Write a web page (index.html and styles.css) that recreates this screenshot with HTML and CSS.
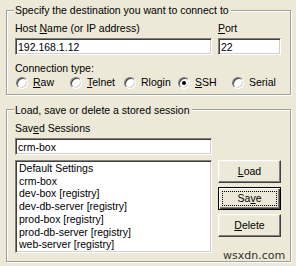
FILE: index.html
```html
<!DOCTYPE html>
<html>
<head>
<meta charset="utf-8">
<link rel="stylesheet" href="styles.css">
</head>
<body>
<div class="dlg">
  <div class="group g1">
    <div class="legend">Specify the destination you want to connect to</div>
    <div class="grid hostgrid">
      <div class="lbl">Host <u>N</u>ame (or IP address)</div>
      <div class="lbl"><u>P</u>ort</div>
      <div class="edit">192.168.1.12</div>
      <div class="edit">22</div>
    </div>
    <div class="lbl ctlabel">Connection type:</div>
    <div class="radios">
      <div class="radio"><span class="rb"></span><span><u>R</u>aw</span></div>
      <div class="radio"><span class="rb"></span><span><u>T</u>elnet</span></div>
      <div class="radio"><span class="rb"></span><span>Rlogin</span></div>
      <div class="radio"><span class="rb on"></span><span><u>S</u>SH</span></div>
      <div class="radio"><span class="rb"></span><span>Serial</span></div>
    </div>
  </div>
  <div class="group g2">
    <div class="legend">Load, save or delete a stored session</div>
    <div class="grid sessgrid">
      <div class="lbl">Sav<u>e</u>d Sessions</div>
      <div></div>
      <div class="edit">crm-box</div>
      <div></div>
      <div class="list">
        <div>Default Settings</div>
        <div>crm-box</div>
        <div>dev-box [registry]</div>
        <div>dev-db-server [registry]</div>
        <div>prod-box [registry]</div>
        <div>prod-db-server [registry]</div>
        <div>web-server [registry]</div>
      </div>
      <div class="buttons">
        <div class="btn"><span class="cap"><u>L</u>oad</span></div>
        <div class="btn def"><span class="cap focus">Sa<u>v</u>e</span></div>
        <div class="btn"><span class="cap"><u>D</u>elete</span></div>
      </div>
    </div>
  </div>
  <div class="wm">wsxdn.com</div>
</div>
</body>
</html>
```
FILE: styles.css
```css
* { box-sizing: border-box; }
html, body { margin: 0; padding: 0; }
body {
  width: 296px;
  height: 266px;
  overflow: hidden;
  background: #ece9d8;
  font-family: "Liberation Sans", Arial, sans-serif;
  font-size: 10.5px;
  line-height: 13px;
  color: #000;
}
.dlg {
  position: relative;
  height: 266px;
  padding: 10px 5px 0 6px;
}
.group {
  border: 1px solid #a0a0a0;
  box-shadow: inset 1px 1px 0 #fff, 1px 1px 0 #fff;
  padding: 0 9px 0 8px;
}
.g1 { height: 85px; }
.g2 { height: 153px; margin-top: 14px; }
.legend {
  width: max-content;
  margin: -7px 0 0 -1px;
  padding: 0 2px 0 1px;
  background: #ece9d8;
  height: 13px;
}
.g2 .legend { margin-top: -6px; }
.grid {
  display: grid;
  grid-template-columns: 197px 63px;
  column-gap: 6px;
  margin-top: 5px;
}
.lbl { height: 13px; white-space: nowrap; }
.edit {
  margin-top: 3px;
  height: 17px;
  background: #fff;
  border: 1px solid;
  border-color: #808080 #fff #fff #808080;
  box-shadow: inset 1px 1px 0 #404040, inset -1px -1px 0 #d4d0c8;
  padding: 2px 0 0 2px;
  white-space: nowrap;
  overflow: hidden;
}
.ctlabel { margin-top: 7px; }
.radios {
  display: grid;
  grid-template-columns: repeat(5, 54px);
  margin: 1px 0 0 1px;
}
.radio {
  display: flex;
  align-items: center;
  height: 13px;
  white-space: nowrap;
}
.rb {
  width: 12px;
  height: 12px;
  margin-right: 5px;
  flex: none;
  border-radius: 50%;
  border: 1px solid;
  border-color: #808080 #fff #fff #808080;
  background: #fff;
  box-shadow: inset 1px 1px 0 #404040, inset -1px -1px 0 #d4d0c8;
  display: flex;
  align-items: center;
  justify-content: center;
}
.rb.on::before {
  content: "";
  width: 4px;
  height: 4px;
  border-radius: 50%;
  background: #000;
}
.list {
  margin-top: 5px;
  height: 93px;
  background: #fff;
  border: 1px solid;
  border-color: #808080 #fff #fff #808080;
  box-shadow: inset 1px 1px 0 #404040, inset -1px -1px 0 #d4d0c8;
  padding: 1px 0 0 3px;
  line-height: 12.7px;
  overflow: hidden;
  white-space: nowrap;
}
.buttons {
  margin-top: 5px;
  display: flex;
  flex-direction: column;
  gap: 4px;
}
.btn {
  height: 23px;
  display: flex;
  padding: 3px;
  border: 1px solid;
  border-color: #fff #404040 #404040 #fff;
  box-shadow: inset -1px -1px 0 #808080, inset 1px 1px 0 #f1efe2;
  background: #ece9d8;
}
.btn.def {
  border-color: #000;
  box-shadow: inset 1px 1px 0 #fff, inset -1px -1px 0 #404040, inset -2px -2px 0 #808080;
}
.cap {
  flex: 1;
  display: flex;
  align-items: center;
  justify-content: center;
  border: 1px dotted transparent;
}
.cap.focus { border-color: #000; }
.wm {
  position: absolute;
  left: 223px;
  top: 249px;
  font-family: "DejaVu Sans", sans-serif;
  font-size: 11px;
  line-height: 13px;
  color: #333;
}
```
